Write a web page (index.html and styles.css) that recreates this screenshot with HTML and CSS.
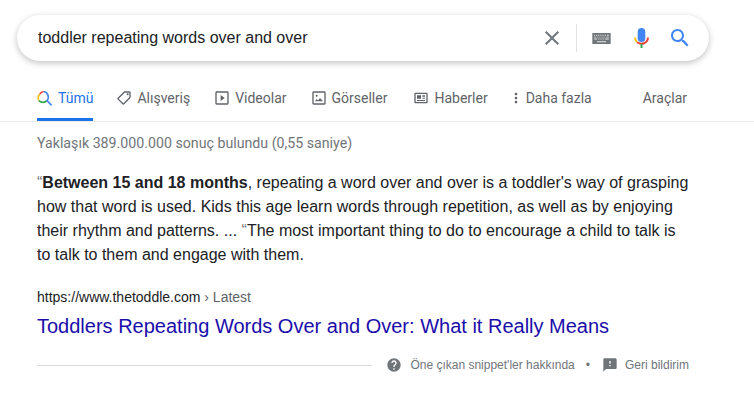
FILE: index.html
```html
<!DOCTYPE html>
<html>
  <head>
    <meta charset="UTF-8">
    <title>toddler repeating words over and over</title>
    <link rel="stylesheet" href="styles.css">
  </head>
  <body>
    <div class="search-box">
      <span class="query">toddler repeating words over and over</span>
      <svg class="icon-clear" width="24" height="24" viewBox="0 0 24 24"><path fill="#70757a" d="M19 6.41 17.59 5 12 10.59 6.41 5 5 6.41 10.59 12 5 17.59 6.41 19 12 13.41 17.59 19 19 17.59 13.41 12z"/></svg>
      <span class="divider"></span>
      <svg class="icon-keyboard" width="19" height="11" viewBox="0 0 20 12"><path fill="#70757a" d="M0 0h20v12H0z"/><path fill="#e8e8e8" d="M2 2h1v1H2zM4 2h1v1H4zM6 2h1v1H6zM8 2h1v1H8zM10 2h1v1h-1zM12 2h1v1h-1zM14 2h1v1h-1zM16 2h2v1h-2zM2 4h2v1H2zM5 4h1v1H5zM7 4h1v1H7zM9 4h1v1H9zM11 4h1v1h-1zM13 4h1v1h-1zM15 4h3v1h-3zM2 6h3v1H2zM6 6h1v1H6zM8 6h1v1H8zM10 6h1v1h-1zM12 6h1v1h-1zM14 6h4v1h-4zM5 9h10v1H5z"/></svg>
      <svg class="icon-mic" width="15" height="20" viewBox="0 0 15 20" fill="none">
        <rect fill="#4285f4" x="3.700" y="0" width="7.600" height="14" rx="3.800"/>
        <path stroke="#ea4335" stroke-width="2" d="M3.100 14A6.500 6.500 0 0 0 14 9.500"/>
        <path stroke="#fbbc05" stroke-width="2" d="M1 9.500A6.500 6.500 0 0 0 3.100 14"/>
        <path fill="#34a853" d="M6.500 16h2v4h-2z"/>
      </svg>
      <svg class="icon-search" width="24" height="24" viewBox="0 0 24 24"><path fill="#4285f4" d="M15.500 14h-.8l-.3-.3c1-1.100 1.600-2.600 1.600-4.200C16 5.900 13.100 3 9.500 3S3 5.900 3 9.500 5.900 16 9.500 16c1.600 0 3.100-.6 4.200-1.600l.3.3v.8l5 5 1.500-1.500-4.500-5zm-6 0C7 14 5 12 5 9.500S7 5 9.500 5 14 7 14 9.500 12 14 9.500 14z"/></svg>
    </div>

    <div class="tabs">
      <a class="tab active">
        <svg width="16" height="16" viewBox="0 0 24 24" fill="none" stroke-width="2.400">
          <path stroke="#ea4335" d="M4 6.500A8.500 8.500 0 0 1 10 2.200"/>
          <path stroke="#fbbc05" d="M2.800 16A8.500 8.500 0 0 1 4 6.500"/>
          <path stroke="#34a853" d="M15 16A8.500 8.500 0 0 1 2.800 16"/>
          <path stroke="#4285f4" d="M10 2.200A8.500 8.500 0 0 1 15 16l7 7"/>
        </svg>
        Tümü
      </a>
      <a class="tab">
        <svg width="16" height="16" viewBox="0 0 24 24"><path fill="#5f6368" d="M21.400 11.600l-9-9C12 2.200 11.500 2 11 2H4c-1.100 0-2 .9-2 2v7c0 .5.200 1 .6 1.400l9 9c.4.400.9.600 1.400.600s1-.2 1.400-.6l7-7c.4-.4.600-.9.600-1.400s-.2-1-.6-1.400zM13 20l-9-9V4h7l9 9-7 7z" transform="rotate(90 12 12)"/><circle fill="#5f6368" cx="17.500" cy="6.500" r="1.500"/></svg>
        Alışveriş
      </a>
      <a class="tab">
        <svg width="16" height="16" viewBox="0 0 24 24"><path fill="#5f6368" d="M10 16.500l6-4.500-6-4.500v9zM20 2H4C2.900 2 2 2.900 2 4v16c0 1.100.9 2 2 2h16c1.100 0 2-.9 2-2V4c0-1.100-.9-2-2-2zm0 18H4V4h16v16z"/></svg>
        Videolar
      </a>
      <a class="tab images">
        <svg width="16" height="16" viewBox="0 0 24 24"><path fill="#5f6368" d="M20 2H4C2.900 2 2 2.900 2 4v16c0 1.100.9 2 2 2h16c1.100 0 2-.9 2-2V4c0-1.100-.9-2-2-2zm0 18H4V4h16v16zM13.500 12l-3 3.900-2-2.500L6 17h12l-4.500-5z"/><circle fill="#5f6368" cx="8.500" cy="8.500" r="1.500"/></svg>
        Görseller
      </a>
      <a class="tab news">
        <svg width="16" height="16" viewBox="0 0 24 24"><path fill="#5f6368" d="M20 4H4C2.900 4 2 4.900 2 6v12c0 1.100.9 2 2 2h16c1.100 0 2-.9 2-2V6c0-1.100-.9-2-2-2zm0 14H4V6h16v12zM6 8h6v5H6zM14 8h4v2h-4zM14 11.500h4v1.500h-4zM6 15h12v1.500H6z"/></svg>
        Haberler
      </a>
      <a class="tab more">
        <svg width="16" height="16" viewBox="0 0 24 24"><path fill="#5f6368" d="M12 8c1.100 0 2-.9 2-2s-.9-2-2-2-2 .9-2 2 .9 2 2 2zm0 2c-1.100 0-2 .9-2 2s.9 2 2 2 2-.9 2-2-.9-2-2-2zm0 6c-1.100 0-2 .9-2 2s.9 2 2 2 2-.9 2-2-.9-2-2-2z"/></svg>
        Daha fazla
      </a>
      <a class="tab tools">Araçlar</a>
    </div>

    <div class="content">
      <div class="stats">Yaklaşık 389.000.000 sonuç bulundu (0,55 saniye)</div>
      <p class="snippet"><span class="quote">“</span><b>Between 15 and 18 months</b>, repeating a word over and over is a toddler's way of grasping how that word is used. Kids this age learn words through repetition, as well as by enjoying their rhythm and patterns. ... <span class="quote">“</span>The most important thing to do to encourage a child to talk is to talk to them and engage with them.</p>
      <div class="cite">https://www.thetoddle.com <span class="crumb">› Latest</span></div>
      <a class="result-title">Toddlers Repeating Words Over and Over: What it Really Means</a>
      <div class="footer">
        <span class="rule"></span>
        <svg width="16" height="16" viewBox="0 0 24 24"><path fill="#70757a" d="M12 2C6.500 2 2 6.500 2 12s4.500 10 10 10 10-4.500 10-10S17.500 2 12 2zm1 17h-2v-2h2v2zm2.100-7.700l-.9.900c-.8.700-1.200 1.300-1.200 2.800h-2v-.5c0-1.100.4-2.100 1.200-2.800l1.200-1.300c.4-.3.600-.8.600-1.400 0-1.100-.9-2-2-2s-2 .9-2 2H8c0-2.200 1.800-4 4-4s4 1.800 4 4c0 .9-.4 1.700-.9 2.300z"/></svg>
        <span class="foot-link about">Öne çıkan snippet'ler hakkında</span>
        <span class="dot">•</span>
        <svg width="16" height="16" viewBox="0 0 24 24"><path fill="#70757a" d="M20 2H4C2.900 2 2 2.900 2 4v18l4-4h14c1.100 0 2-.9 2-2V4c0-1.100-.9-2-2-2zm-7 12h-2v-2h2v2zm0-4h-2V6h2v4z"/></svg>
        <span class="foot-link feedback">Geri bildirim</span>
      </div>
    </div>
  </body>
</html>
```

FILE: styles.css
```css
body {
  margin: 0;
  background-color: #fff;
  font-family: "Liberation Sans", Arial, sans-serif;
  color: #202124;
  overflow: hidden;
}

.search-box {
  display: flex;
  align-items: center;
  width: 692px;
  height: 46px;
  margin: 15px 0 0 17px;
  border-radius: 23px;
  background-color: #fff;
  box-shadow: 0 2px 6px rgba(32, 33, 36, 0.28);
}

.query {
  flex: 1;
  padding-left: 21px;
  font-size: 16px;
}

.icon-clear {
  margin-right: 12px;
}

.divider {
  width: 1px;
  height: 28px;
  background-color: #dfe1e5;
  margin-right: 15px;
}

.icon-keyboard {
  margin-right: 23px;
}

.icon-mic {
  margin-right: 19px;
}

.icon-search {
  margin-right: 17px;
}

.tabs {
  display: flex;
  height: 60px;
  padding-left: 37px;
  border-bottom: 1px solid #ebebeb;
  font-family: Roboto, Arial, sans-serif;
  font-size: 14px;
  color: #5f6368;
}

.tab {
  display: flex;
  align-items: center;
  gap: 5px;
  margin-right: 24px;
  border-bottom: 3px solid transparent;
  padding-top: 17px;
}

.tab.active {
  color: #1a73e8;
  border-bottom-color: #1a73e8;
  margin-right: 23px;
}

.tab.images {
  margin-right: 26px;
}

.tab.news {
  margin-right: 20px;
}

.tab.more {
  gap: 2px;
  margin-right: 51px;
}

.tab.tools {
  margin-right: 0;
}

.content {
  width: 652px;
  padding-left: 37px;
}

.stats {
  margin-top: 13px;
  font-family: Roboto, Arial, sans-serif;
  font-size: 14.200px;
  line-height: 17px;
  color: #70757a;
}

.snippet {
  margin: 19px 0 0;
  font-size: 16px;
  line-height: 24px;
}

.quote {
  color: #70757a;
}

.cite {
  margin-top: 20px;
  font-size: 14px;
  line-height: 20px;
  color: #202124;
}

.crumb {
  color: #5f6368;
}

.result-title {
  display: block;
  margin-top: 6px;
  font-size: 20px;
  line-height: 26px;
  color: #1a0dab;
}

.footer {
  display: flex;
  align-items: center;
  margin-top: 18px;
  font-size: 12px;
  color: #70757a;
}

.rule {
  flex: 1;
  height: 1px;
  background-color: #dadce0;
  margin-right: 14px;
}

.about {
  margin-left: 8px;
}

.dot {
  margin: 0 12px 0 11px;
}

.feedback {
  margin-left: 7px;
}
```
